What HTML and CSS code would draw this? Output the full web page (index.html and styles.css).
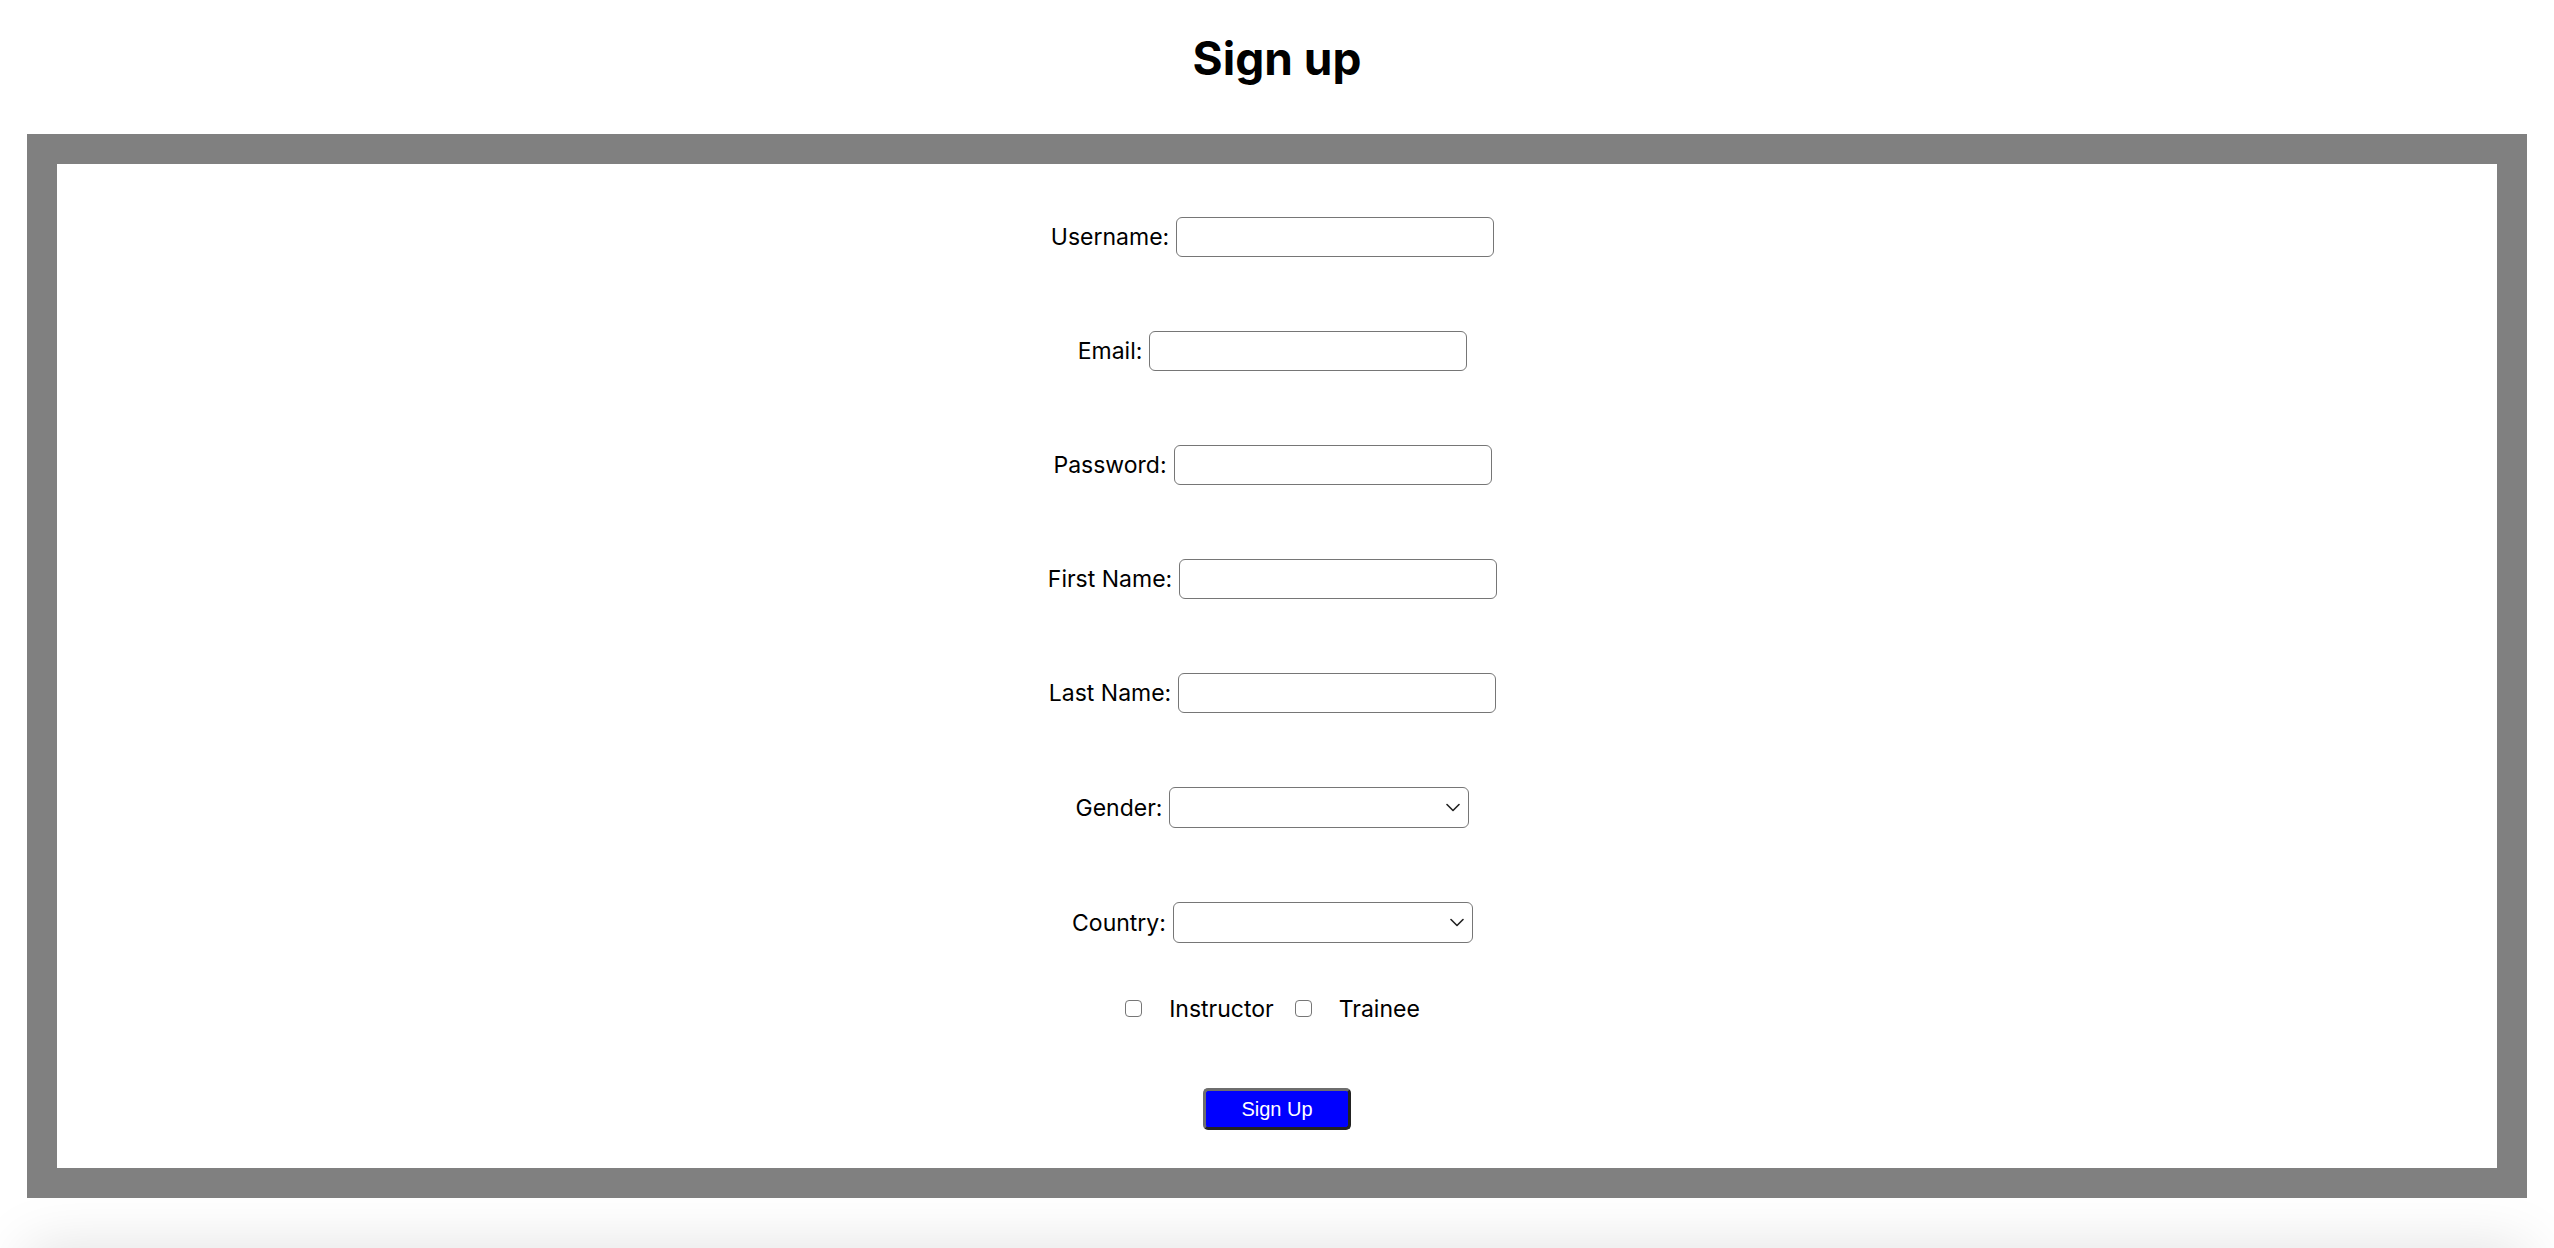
FILE: index.html
```html
<!DOCTYPE html>
<html lang="en">

<head>
    <meta charset="UTF-8">
    <meta name="viewport" content="width=device-width, initial-scale=1.0">
    <title>Sign up</title>
    <link rel="stylesheet" href="styles.css">
</head>

<body>
    <h1 class="page-title">Sign up</h1>
    <div class="signup-frame">
        <form class="signup-form" id="signup-form">
            <div class="form-row">
                <label for="username">Username:</label>
                <input type="text" id="username" name="username">
            </div>
            <div class="form-row">
                <label for="email">Email:</label>
                <input type="email" id="email" name="email">
            </div>
            <div class="form-row">
                <label for="password">Password:</label>
                <input type="password" id="password" name="password">
            </div>
            <div class="form-row">
                <label for="first-name">First Name:</label>
                <input type="text" id="first-name" name="firstName">
            </div>
            <div class="form-row">
                <label for="last-name">Last Name:</label>
                <input type="text" id="last-name" name="lastName">
            </div>
            <div class="form-row">
                <label for="gender">Gender:</label>
                <span class="select-wrap">
                    <select id="gender" name="gender">
                        <option value=""></option>
                        <option value="male">Male</option>
                        <option value="female">Female</option>
                    </select>
                    <svg class="select-arrow" width="14" height="9" viewBox="0 0 14 9"><path d="M1 1.5 L7 7.5 L13 1.5" fill="none" stroke="#222" stroke-width="1.6" stroke-linecap="round" stroke-linejoin="round"/></svg>
                </span>
            </div>
            <div class="form-row form-row-last">
                <label for="country">Country:</label>
                <span class="select-wrap">
                    <select id="country" name="country">
                        <option value=""></option>
                    </select>
                    <svg class="select-arrow" width="14" height="9" viewBox="0 0 14 9"><path d="M1 1.5 L7 7.5 L13 1.5" fill="none" stroke="#222" stroke-width="1.6" stroke-linecap="round" stroke-linejoin="round"/></svg>
                </span>
            </div>
            <div class="role-row">
                <input type="checkbox" id="instructor" name="instructor">
                <label for="instructor">Instructor</label>
                <input type="checkbox" id="trainee" name="trainee">
                <label for="trainee">Trainee</label>
            </div>
            <button type="submit" class="signup-btn">Sign Up</button>
        </form>
    </div>
    <div class="page-shade">
        <div class="page-shade-bar"></div>
    </div>
</body>

</html>
```

FILE: styles.css
```css
html,
body {
    margin: 0;
    padding: 0;
    background-color: #fff;
}

body {
    font-family: Inter, "Noto Sans", Arial, sans-serif;
    color: #000;
    height: 1248px;
    overflow: hidden;
}

.page-title {
    font-size: 46px;
    font-weight: 700;
    line-height: 56px;
    text-align: center;
    margin: 30px 0 48px;
}

.signup-frame {
    max-width: 2440px;
    margin: 0 auto;
    border: 30px solid #808080;
    background-color: #fff;
}

.signup-form {
    display: flex;
    flex-direction: column;
    align-items: center;
    padding: 53px 0 38px;
}

.form-row {
    display: flex;
    align-items: center;
    gap: 7px;
    margin: 0 9px 74px 0;
    font-size: 23px;
}

.form-row-last {
    margin-bottom: 52px;
}

.form-row input {
    width: 318px;
    height: 40px;
    box-sizing: border-box;
    border: 1px solid #767676;
    border-radius: 6px;
    padding: 0 8px;
    font-size: 16px;
}

.select-wrap {
    position: relative;
    display: inline-block;
}

.select-wrap select {
    appearance: none;
    -webkit-appearance: none;
    width: 300px;
    height: 41px;
    box-sizing: border-box;
    border: 1px solid #767676;
    border-radius: 6px;
    background-color: #fff;
    padding: 0 8px;
    font-size: 16px;
    display: block;
}

.select-arrow {
    position: absolute;
    right: 9px;
    top: 16px;
    pointer-events: none;
}

.role-row {
    display: flex;
    align-items: center;
    font-size: 23px;
    line-height: 29px;
    margin: 0 9px 64px 0;
}

.role-row input {
    appearance: none;
    -webkit-appearance: none;
    width: 17px;
    height: 17px;
    box-sizing: border-box;
    border: 1px solid #767676;
    border-radius: 4px;
    margin: 0 27px 2px 0;
    background-color: #fff;
}

.role-row label {
    margin-right: 21px;
}

.role-row label:last-child {
    margin-right: 0;
}

.signup-btn {
    width: 148px;
    height: 42px;
    box-sizing: border-box;
    background-color: #0000ff;
    color: #fff;
    font-family: "Liberation Sans", Arial, sans-serif;
    font-size: 20px;
    border: 3px solid;
    border-color: #6e6e6e #222 #222 #6e6e6e;
    border-radius: 5px;
    cursor: pointer;
}

.page-shade {
    height: 50px;
    overflow: hidden;
}

.page-shade-bar {
    max-width: 2500px;
    height: 60px;
    margin: 50px auto 0;
    box-shadow: 0 0 60px rgba(0, 0, 0, 0.13);
}
```
